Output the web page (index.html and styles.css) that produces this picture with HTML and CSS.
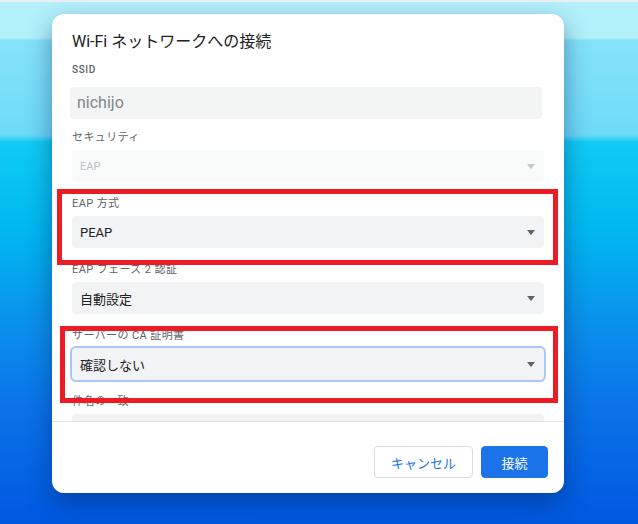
FILE: index.html
```html
<!DOCTYPE html>
<html lang="ja">
<head>
    <meta charset="UTF-8">
    <meta name="viewport" content="width=device-width, initial-scale=1.0">
    <title>Wi-Fi ネットワークへの接続</title>
    <link rel="stylesheet" href="styles.css">
</head>
<body>

<div class="dialog">
    <div class="dialog-body">
        <h1 class="dialog-title">Wi-Fi ネットワークへの接続</h1>

        <div class="field field-ssid">
            <div class="label label-caps">SSID</div>
            <div class="text-input">nichijo</div>
        </div>

        <div class="field field-security">
            <div class="label">セキュリティ</div>
            <div class="select disabled"><span>EAP</span><span class="arrow"></span></div>
        </div>

        <div class="field">
            <div class="label">EAP 方式</div>
            <div class="select"><span>PEAP</span><span class="arrow"></span></div>
        </div>

        <div class="field">
            <div class="label">EAP フェーズ 2 認証</div>
            <div class="select"><span>自動設定</span><span class="arrow"></span></div>
        </div>

        <div class="field">
            <div class="label">サーバーの CA 証明書</div>
            <div class="select focused"><span>確認しない</span><span class="arrow"></span></div>
        </div>

        <div class="field">
            <div class="label">件名の一致</div>
            <div class="text-input plain"></div>
        </div>
    </div>

    <div class="dialog-footer">
        <button class="btn btn-outline">キャンセル</button>
        <button class="btn btn-primary">接続</button>
    </div>
</div>

<!-- 赤枠 -->
<div class="mark mark-method"></div>
<div class="mark mark-ca"></div>

</body>
</html>
```

FILE: styles.css
```css
html, body {
    margin: 0;
    height: 524px;
    overflow: hidden;
}
body {
    position: relative;
    font-family: Roboto, "Noto Sans CJK JP", sans-serif;
    border-top: 2px solid #e9eef0;
    box-sizing: border-box;
    background: linear-gradient(180deg,
        #b3f1fb 0px, #b3f1fb 38px,
        #86e3f9 40px, #6edaf8 135px,
        #10cbf3 142px, #00b8f0 230px,
        #0a92ec 320px, #0a72e8 410px,
        #0058e0 524px);
}
.dialog {
    margin: 12px 0 0 52px;
    width: 512px;
    height: 479px;
    background-color: #fff;
    border-radius: 12px;
    box-shadow: 0 10px 26px rgba(0, 30, 100, 0.45);
    display: flex;
    flex-direction: column;
    overflow: hidden;
}
.dialog-body {
    height: 407px;
    padding: 18px 20px 0;
    box-sizing: border-box;
    overflow: hidden;
}
.dialog-title {
    margin: 0;
    font-size: 16px;
    line-height: 20px;
    font-weight: 400;
    color: #202124;
}
.field {
    margin-top: 15px;
}
.field-ssid {
    margin-top: 11px;
}
.field-security {
    margin-top: 12px;
}
.label {
    font-size: 11px;
    line-height: 14px;
    color: #5f6368;
    letter-spacing: 0.4px;
    margin-bottom: 5px;
}
.label-caps {
    font-size: 10px;
    font-weight: 500;
    letter-spacing: 0.6px;
    margin-bottom: 10px;
}
.text-input {
    height: 32px;
    margin: 0 2px 0 -2px;
    padding-left: 7px;
    background-color: #f3f4f4;
    border-radius: 4px;
    font-size: 16px;
    line-height: 32px;
    color: #80868b;
}
.text-input.plain {
    margin: 0;
    background-color: #f1f3f4;
}
.select {
    height: 32px;
    padding: 0 9px 0 8px;
    background-color: #f1f3f4;
    border-radius: 4px;
    display: flex;
    align-items: center;
    justify-content: space-between;
    font-size: 13px;
    color: #202124;
}
.select.disabled {
    background-color: #f8f9f9;
    color: #bdc1c6;
    font-size: 11px;
}
.select.focused {
    box-shadow: 0 0 0 2px #a8c7fa;
}
.arrow {
    width: 0;
    height: 0;
    border-left: 4.5px solid transparent;
    border-right: 4.5px solid transparent;
    border-top: 5px solid #5f6368;
}
.disabled .arrow {
    border-top-color: #c4c7ca;
}
.dialog-footer {
    flex: 1;
    border-top: 1px solid #e3e4e6;
    display: flex;
    justify-content: flex-end;
    align-items: flex-start;
    gap: 8px;
    padding: 24px 16px 0;
}
.btn {
    height: 32px;
    border-radius: 4px;
    font-family: inherit;
    font-size: 13px;
    font-weight: 400;
    cursor: pointer;
}
.btn-outline {
    padding: 0 16px;
    background-color: #fff;
    border: 1px solid #dadce0;
    color: #1a73e8;
    width: 99px;
}
.btn-primary {
    min-width: 67px;
    padding: 0 16px;
    background-color: #1a73e8;
    border: 1px solid #1a73e8;
    color: #fff;
}
.mark {
    position: absolute;
    border: 5px solid #ed1c24;
    box-sizing: border-box;
}
.mark-method {
    left: 57px;
    top: 187px;
    width: 501px;
    height: 76px;
}
.mark-ca {
    left: 60px;
    top: 324px;
    width: 498px;
    height: 77px;
}
```
